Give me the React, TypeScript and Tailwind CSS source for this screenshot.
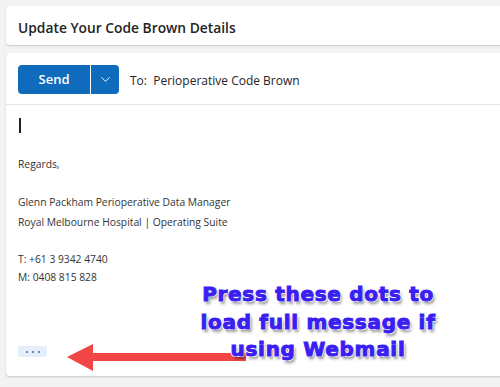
import { ChevronDown } from "lucide-react";

const sans = "font-['Open_Sans','Noto_Sans',sans-serif]";

const Annotation = () => {
  return (
    <div className="absolute left-[60px] top-[280px] w-[420px] h-[100px] pointer-events-none">
      {/* red arrow */}
      <svg className="absolute left-[6px] top-[63px]" width="190" height="30" viewBox="0 0 190 30">
        <polygon points="1,14 27,1 27,10 180,10 180,18 27,18 27,28" fill="#f24545" />
      </svg>
      <div
        className="absolute left-[108px] top-[1px] w-[300px] text-center text-[20px] leading-[27.5px] tracking-[0.7px] font-bold text-[#3a1ef2] font-['DejaVu_Sans',Verdana,sans-serif] [-webkit-text-stroke:1px_#3a1ef2] [text-shadow:-1px_-1px_0_#fff,1px_-1px_0_#fff,-1px_1px_0_#fff,1px_1px_0_#fff,2px_3px_3px_rgba(0,0,0,0.45)]"
      >
        <div>Press these dots to</div>
        <div>load full message if</div>
        <div>using Webmail</div>
      </div>
    </div>
  );
};

export default function App() {
  return (
    <div className={`relative w-[500px] h-[387px] overflow-hidden bg-[#f3f3f3] ${sans}`}>
      <div className="flex flex-col gap-[8px] pt-[6px] pl-[6px] w-[520px]">
        {/* Header card */}
        <div className="h-[39px] bg-white rounded-[4px] shadow-[0_1px_2px_rgba(0,0,0,0.18)] flex items-center px-3 pt-[6px]">
          <h1 className="text-[13.8px] font-semibold text-[#242424]">Update Your Code Brown Details</h1>
        </div>

        {/* Compose card */}
        <div className="h-[323px] bg-white rounded-[4px] shadow-[0_1px_2px_rgba(0,0,0,0.18)] flex flex-col">
          <div className="flex items-center gap-[11px] px-3 pt-[12px] pb-[10px] border-b border-[#e6e6e6]">
            <div className="flex h-[29px] rounded-[4px] overflow-hidden">
              <button className="w-[72px] bg-[#0f6cbd] text-white text-[13px] font-semibold pt-px">Send</button>
              <div className="w-px bg-white" />
              <button className="w-[28px] bg-[#0f6cbd] text-white flex items-center justify-center">
                <ChevronDown size={15} strokeWidth={1.5} />
              </button>
            </div>
            <span className="text-[12px] text-[#242424] pt-[3px]">To:&nbsp; Perioperative Code Brown</span>
          </div>

          <div className="px-3 pt-[13px] text-[10.3px] text-[#333] leading-[18px]">
            <div className="w-[1.5px] h-[15px] bg-[#222] ml-px" />
            <div className="mt-[22px]">Regards,</div>
            <div className="mt-[20px]">Glenn Packham Perioperative Data Manager</div>
            <div className="mt-[2px]">Royal Melbourne Hospital | Operating Suite</div>
            <div className="mt-[19px]">T: +61 3 9342 4740</div>
            <div>M: 0408 815 828</div>
            <button className="mt-[60px] w-[29px] h-[11px] rounded-[2px] bg-[#e5eefa] flex items-center justify-center gap-[4px]">
              <span className="w-[2px] h-[2px] rounded-full bg-[#2f6fc4]" />
              <span className="w-[2px] h-[2px] rounded-full bg-[#2f6fc4]" />
              <span className="w-[2px] h-[2px] rounded-full bg-[#2f6fc4]" />
            </button>
          </div>
        </div>
      </div>
      <Annotation />
    </div>
  );
}
